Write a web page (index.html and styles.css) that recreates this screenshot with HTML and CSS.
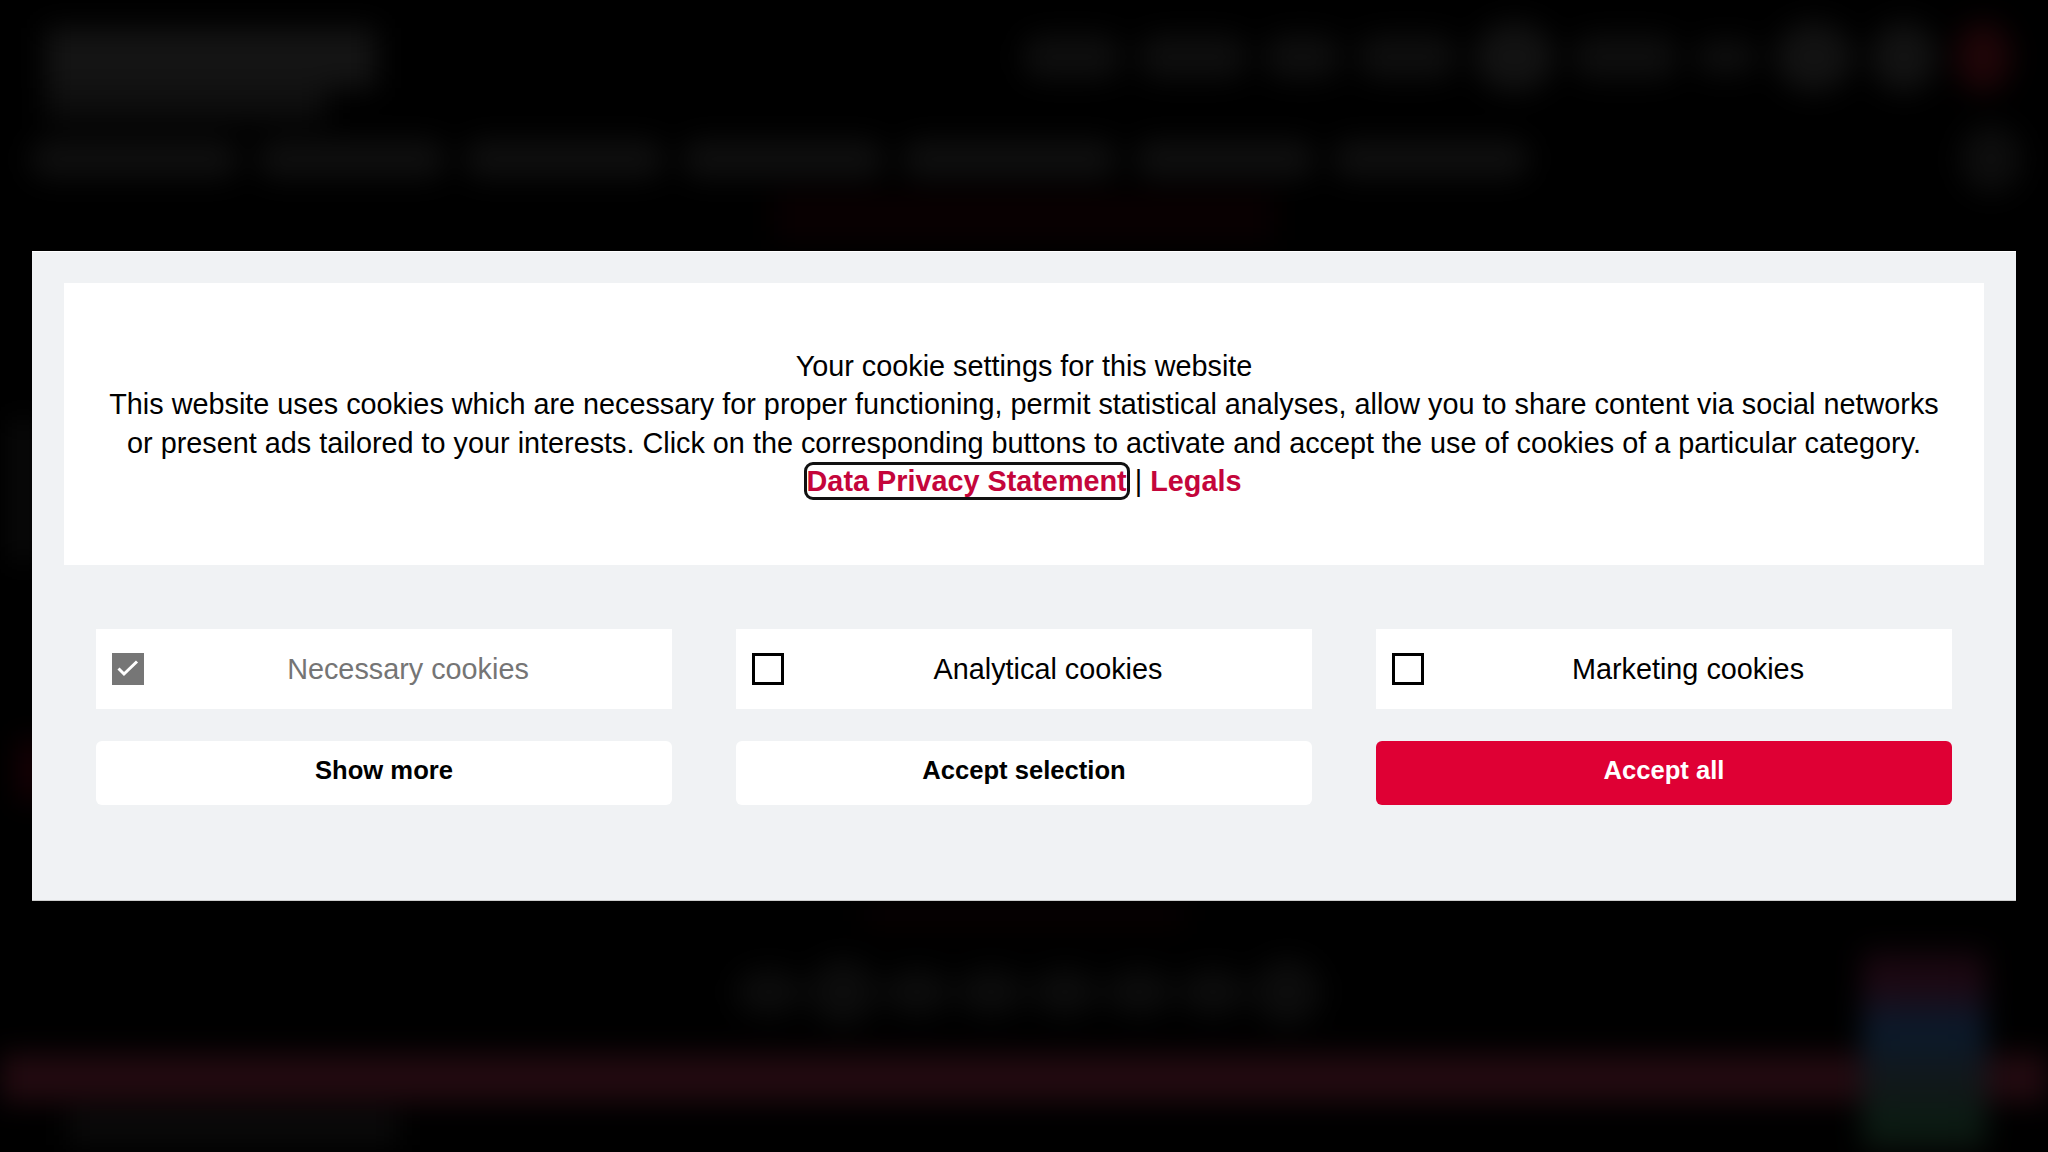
FILE: index.html
```html
<!DOCTYPE html>
<html lang="en">

<head>
  <meta charset="UTF-8">
  <meta name="viewport" content="width=device-width, initial-scale=1.0">
  <title>Cookie settings</title>
  <link rel="stylesheet" href="styles.css">
</head>

<body>
  <!-- page behind the dialog, only visible as blurred shapes -->
  <div class="page" aria-hidden="true">
    <div class="top-bar">
      <div class="logo">
        <div class="logo-top"></div>
        <div class="logo-bottom"></div>
      </div>
      <div class="meta-nav">
        <span></span><span></span><span></span><span></span>
        <span class="tall"></span><span></span><span class="small"></span>
        <span class="tall"></span><span class="tall"></span><span class="tall red"></span>
      </div>
    </div>
    <div class="main-nav">
      <span></span><span></span><span></span><span></span><span></span><span></span><span></span>
      <i class="search"></i>
    </div>
    <div class="glow"></div>
    <div class="content">
      <div class="side"></div>
      <div class="side side-red"></div>
      <div class="glow-low"></div>
    </div>
    <div class="bottom-title">
      <span></span><span class="tall"></span><span></span><span></span><span></span><span></span><span></span><span class="tall"></span>
    </div>
    <div class="band"></div>
    <div class="foot"></div>
    <div class="badge"></div>
  </div>

  <div class="dialog">
    <div class="intro">
      <p>Your cookie settings for this website<br>
        This website uses cookies which are necessary for proper functioning, permit statistical analyses, allow you to share content via social networks or present ads tailored to your interests. Click on the corresponding buttons to activate and accept the use of cookies of a particular category.<br>
        <a href="#" class="focused">Data Privacy Statement</a> | <a href="#">Legals</a></p>
    </div>

    <div class="options">
      <label class="option disabled">
        <span class="box">
          <svg viewBox="0 0 32 32" width="32" height="32"><path d="M6.5 15.5l5.5 5.5L25 8.5" fill="none" stroke="#fff" stroke-width="3"/></svg>
        </span>
        <span class="option-text">Necessary cookies</span>
      </label>
      <label class="option">
        <span class="box"></span>
        <span class="option-text">Analytical cookies</span>
      </label>
      <label class="option">
        <span class="box"></span>
        <span class="option-text">Marketing cookies</span>
      </label>

      <button>Show more</button>
      <button>Accept selection</button>
      <button class="primary">Accept all</button>
    </div>
  </div>
</body>

</html>
```

FILE: styles.css
```css
* {
  box-sizing: border-box;
}

html,
body {
  height: 100%;
}

body {
  margin: 0;
  background-color: #000;
  color: #000;
  font-family: "Liberation Sans", Arial, sans-serif;
  overflow: hidden;
}

/* blurred page behind the dialog */

.page {
  height: 1152px;
  filter: blur(14px);
  position: relative;
  overflow: hidden;
}

.page span,
.page i {
  display: block;
  border-radius: 18px;
}

.top-bar {
  display: flex;
  justify-content: space-between;
  height: 124px;
  padding: 28px 37px 0 46px;
}

.logo-top {
  width: 330px;
  height: 60px;
  background-color: #141414;
}

.logo-bottom {
  width: 280px;
  height: 32px;
  background-color: #0e0e0e;
}

.meta-nav {
  display: grid;
  grid-template-columns: 98px 108px 75px 98px 81px 104px 62px 78px 66px 56px;
  gap: 18px;
  height: 60px;
  margin-top: -6px;
  align-items: center;
}

.meta-nav span {
  height: 44px;
  background-color: #0e0e0e;
}

.meta-nav .tall {
  height: 70px;
  background-color: #121212;
  border-radius: 50%;
}

.meta-nav .small {
  height: 34px;
}

.meta-nav .red {
  background-color: #1f0508;
}

.main-nav {
  display: grid;
  grid-template-columns: 209px 189px 200px 202px 215px 180px 196px 1fr 62px;
  gap: 18px;
  align-items: center;
  height: 70px;
  padding: 0 26px 0 30px;
}

.main-nav span {
  height: 38px;
  background-color: #0f0f0f;
}

.main-nav .search {
  grid-column: 9;
  height: 68px;
  background-color: #0d0d0d;
  border-radius: 50%;
}

.glow {
  width: 500px;
  height: 46px;
  margin: 0 auto;
  background-color: #090001;
}

.content {
  height: 720px;
  padding-top: 180px;
}

.side {
  width: 22px;
  height: 140px;
  margin-left: 12px;
  background-color: #0c0c0c;
}

.side-red {
  height: 60px;
  margin-top: 180px;
  margin-left: 20px;
  background-color: #1c0006;
}

.glow-low {
  width: 320px;
  height: 20px;
  margin: 105px auto 0;
  background-color: #090001;
}

.bottom-title {
  display: flex;
  justify-content: center;
  align-items: center;
  gap: 6px;
  height: 63px;
  padding-left: 8px;
}

.bottom-title span {
  width: 68px;
  height: 46px;
  border-radius: 50%;
  background-color: #0c0c0c;
}

.bottom-title .tall {
  height: 66px;
}

.band {
  height: 48px;
  margin: 31px -40px 0;
  background-color: #220a10;
}

.foot {
  width: 330px;
  height: 34px;
  margin: 9px 0 0 68px;
  background-color: #0a0a0a;
}

.badge {
  position: absolute;
  top: 950px;
  right: 62px;
  width: 124px;
  height: 210px;
  background: linear-gradient(#12060c 0%, #1e0812 15%, #0a1a2c 38%, #12171a 62%, #0a1c12 85%, #0c0a0a 100%);
}

/* dialog */

.dialog {
  position: absolute;
  top: 251px;
  left: 32px;
  width: 1984px;
  height: 650px;
  padding: 32px;
  background-color: #f0f2f4;
  box-shadow: inset 0 1px #fff, inset 0 -1px #ccc;
}

.intro {
  height: 282px;
  padding: 64px 32px 0;
  background-color: #fff;
  text-align: center;
  font-size: 28.8px;
  line-height: 38.4px;
}

.intro p {
  margin: 0;
}

.intro a {
  color: #c4053b;
  font-weight: bold;
  text-decoration: none;
}

.intro a.focused {
  outline: 3px solid #111;
  border-radius: 6px;
}

.options {
  display: grid;
  grid-template-columns: repeat(3, 576px);
  grid-template-rows: 80px 64px;
  gap: 32px 64px;
  padding: 0 32px;
  margin-top: 64px;
}

.option {
  display: flex;
  align-items: center;
  padding-left: 16px;
  background-color: #fff;
  font-size: 28.8px;
}

.option-text {
  flex: 1;
  text-align: center;
}

.box {
  width: 32px;
  height: 32px;
  border: 3px solid #000;
  background-color: #fff;
  flex-shrink: 0;
}

.disabled {
  color: #757575;
}

.disabled .box {
  border: 0;
  background-color: #767676;
}

.box svg {
  display: block;
}

button {
  padding: 0 0 5px;
  border: 0;
  border-radius: 6px;
  background-color: #fff;
  color: #000;
  font-family: inherit;
  font-size: 25.6px;
  font-weight: bold;
}

button.primary {
  background-color: #df0034;
  color: #fff;
}
```
